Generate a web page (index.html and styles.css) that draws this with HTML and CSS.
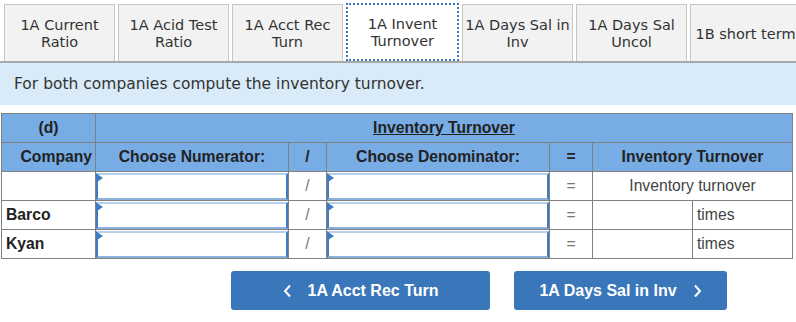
FILE: index.html
```html
<!DOCTYPE html>
<html lang="en">
<head>
    <meta charset="UTF-8">
    <title>Inventory Turnover</title>
    <link rel="stylesheet" href="styles.css">
</head>
<body>

    <!-- Tab strip -->
    <div class="tabs">
        <div class="tab">1A Current<br>Ratio</div>
        <div class="tab">1A Acid Test<br>Ratio</div>
        <div class="tab">1A Acct Rec<br>Turn</div>
        <div class="tab active">1A Invent<br>Turnover</div>
        <div class="tab">1A Days Sal in<br>Inv</div>
        <div class="tab">1A Days Sal<br>Uncol</div>
        <div class="tab">1B short term</div>
    </div>

    <div class="instructions">For both companies compute the inventory turnover.</div>

    <table class="calc">
        <colgroup>
            <col class="w-company">
            <col class="w-num">
            <col class="w-op">
            <col class="w-den">
            <col class="w-eq">
            <col class="w-val">
            <col class="w-unit">
        </colgroup>
        <tr class="head">
            <th>(d)</th>
            <th colspan="6"><u>Inventory Turnover</u></th>
        </tr>
        <tr class="head">
            <th class="right">Company</th>
            <th>Choose Numerator:</th>
            <th>/</th>
            <th>Choose Denominator:</th>
            <th>=</th>
            <th colspan="2">Inventory Turnover</th>
        </tr>
        <tr>
            <td></td>
            <td><div class="select"></div></td>
            <td class="op">/</td>
            <td><div class="select"></div></td>
            <td class="op">=</td>
            <td colspan="2" class="label">Inventory turnover</td>
        </tr>
        <tr>
            <td class="name">Barco</td>
            <td><div class="select"></div></td>
            <td class="op">/</td>
            <td><div class="select"></div></td>
            <td class="op">=</td>
            <td></td>
            <td class="unit">times</td>
        </tr>
        <tr>
            <td class="name">Kyan</td>
            <td><div class="select"></div></td>
            <td class="op">/</td>
            <td><div class="select"></div></td>
            <td class="op">=</td>
            <td></td>
            <td class="unit">times</td>
        </tr>
    </table>

    <!-- Prev / next navigation -->
    <div class="nav">
        <button type="button" class="navBtn prev">
            <svg width="9" height="14" viewBox="0 0 9 14"><polyline points="7,1.5 2,7 7,12.5" fill="none" stroke="#fff" stroke-width="2"/></svg>
            <span>1A Acct Rec Turn</span>
        </button>
        <button type="button" class="navBtn next">
            <span>1A Days Sal in Inv</span>
            <svg width="9" height="14" viewBox="0 0 9 14"><polyline points="2,1.5 7,7 2,12.5" fill="none" stroke="#fff" stroke-width="2"/></svg>
        </button>
    </div>

</body>
</html>
```

FILE: styles.css
```css
body { margin: 0; font-family: "Liberation Sans", Arial, sans-serif; background: #fff; overflow: hidden; }

.tabs {
    display: flex;
    align-items: flex-end;
    gap: 3px;
    padding: 3px 0 0 4px;
    border-bottom: 2px solid #a9a9a9;
    overflow: hidden;
}

.tab {
    flex: 0 0 auto;
    box-sizing: border-box;
    width: 111px;
    height: 57px;
    padding-top: 2px;
    display: flex;
    align-items: center;
    justify-content: center;
    text-align: center;
    background: #f2f2f2;
    border: 1px solid #c6c6c6;
    border-bottom: none;
    font-family: "DejaVu Sans", Verdana, sans-serif;
    font-size: 14.5px;
    line-height: 17px;
    color: #333;
}

.tab.active {
    width: 113px;
    height: 58px;
    background: #fff;
    border: 2px dotted #3b78c4;
}

.instructions {
    background: #d9eaf8;
    height: 42px;
    padding-left: 14px;
    display: flex;
    align-items: center;
    font-family: "DejaVu Sans", Verdana, sans-serif;
    font-size: 15.5px;
    color: #333;
}

.calc {
    margin: 8px 0 0 1px;
    width: 791px;
    table-layout: fixed;
    border-collapse: collapse;
    font-size: 15.7px;
    color: #222;
}

.w-company { width: 94px; }
.w-num { width: 193px; }
.w-op { width: 38px; }
.w-den { width: 223px; }
.w-eq { width: 43px; }
.w-val { width: 100px; }
.w-unit { width: 100px; }

.calc th, .calc td {
    border: 1px solid #808080;
    height: 28px;
    padding: 0;
    white-space: nowrap;
}

.calc th { background: #77ace4; font-weight: bold; text-align: center; }
.calc th.right { text-align: right; padding-right: 3px; }

.op { text-align: center; color: #777; }
.label { text-align: center; color: #444; }
.unit { padding-left: 4px !important; color: #444; }
.name { font-weight: bold; padding-left: 4px !important; }

.select {
    position: relative;
    box-sizing: border-box;
    height: 27px;
    background: #fff;
    border: 2px solid #3d7bc3;
    border-top-color: #b8cfeb;
    border-bottom-color: #8cb0dc;
}
/* small corner marker on the drop-downs */
.select::before {
    content: "";
    position: absolute;
    left: -1px;
    top: -1px;
    border-left: 6px solid #3d7bc3;
    border-top: 4px solid transparent;
    border-bottom: 4px solid transparent;
}

.nav {
    display: flex;
    gap: 24px;
    margin: 12px 0 0 231px;
}

.navBtn {
    display: flex;
    align-items: center;
    justify-content: center;
    gap: 16px;
    height: 39px;
    border: none;
    border-radius: 3px;
    background: #3a76ba;
    color: #fff;
    font-family: "Liberation Sans", Arial, sans-serif;
    font-weight: bold;
    font-size: 16px;
    padding: 0;
}
.prev { width: 259px; }
.next { width: 213px; }
```
